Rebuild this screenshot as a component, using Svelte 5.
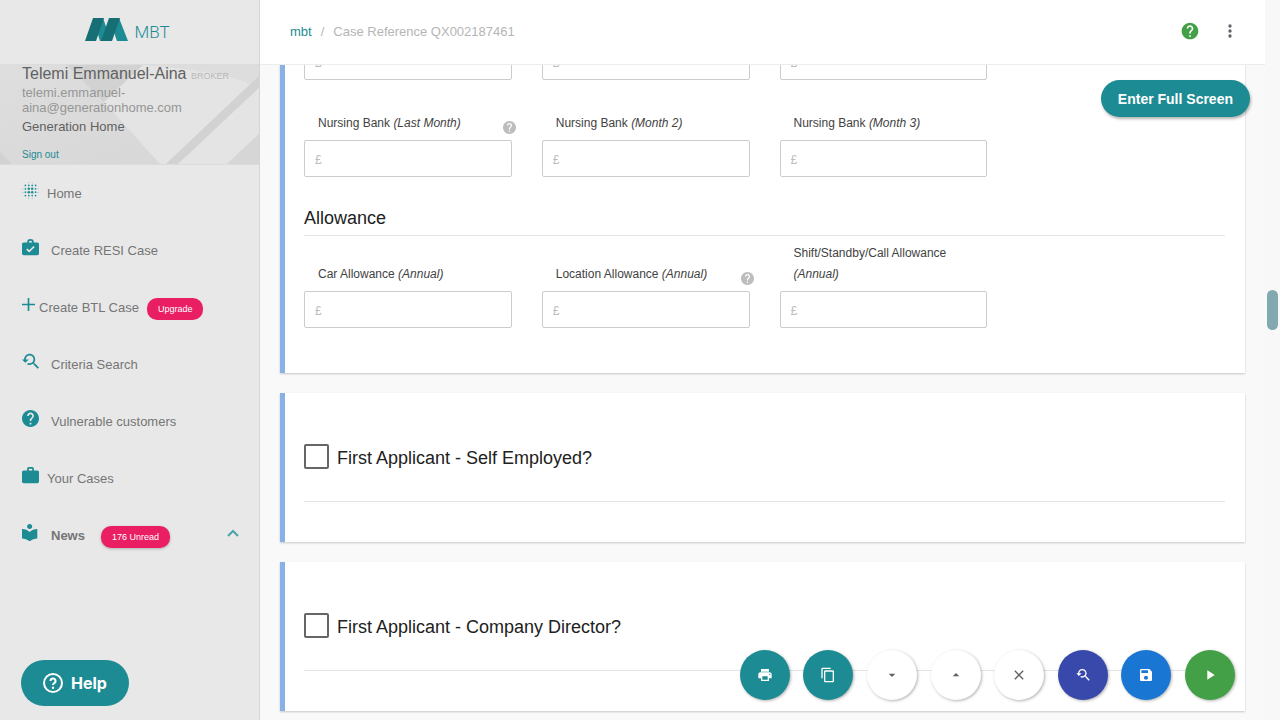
<script>
  const bag = 'M20 6h-4V4c0-1.11-.89-2-2-2h-4c-1.11 0-2 .89-2 2v2H4c-1.11 0-2 .89-2 2v11c0 1.11.89 2 2 2h16c1.11 0 2-.89 2-2V8c0-1.11-.89-2-2-2zm-6 0h-4V4h4v2z';
  const checkBag = 'M20 6h-4a4 4 0 0 0-8 0H4c-1.1 0-2 .9-2 2v11c0 1.1.9 2 2 2h16c1.1 0 2-.9 2-2V8c0-1.1-.9-2-2-2zm-8-2c1.1 0 2 .9 2 2h-4c0-1.1.9-2 2-2zm-1.500 14L7 14.500l1.400-1.400 2.100 2.100 5.100-5.100 1.400 1.400-6.500 6.500z';
  const help = 'M12 2C6.48 2 2 6.48 2 12s4.48 10 10 10 10-4.480 10-10S17.520 2 12 2zm1 17h-2v-2h2v2zm2.070-7.750l-.9.920C13.450 12.900 13 13.500 13 15h-2v-.5c0-1.100.45-2.100 1.170-2.830l1.240-1.260c.37-.36.59-.86.59-1.410 0-1.100-.9-2-2-2s-2 .9-2 2H8c0-2.210 1.790-4 4-4s4 1.790 4 4c0 .88-.36 1.680-.93 2.250z';
  const searchBack = 'M17.01 14h-.8l-.27-.27c.98-1.14 1.57-2.61 1.57-4.23 0-3.59-2.91-6.5-6.5-6.5s-6.5 3-6.5 6.5H2l3.84 4 4.16-4H6.51C6.51 7 8.53 5 11.01 5s4.5 2.01 4.5 4.5c0 2.48-2.02 4.5-4.5 4.5-.65 0-1.26-.14-1.82-.38L7.71 15.1c.97.57 2.09.9 3.3.9 1.61 0 3.08-.59 4.22-1.57l.27.27v.79l5.01 4.99L22 19l-4.99-5z';
  const library = 'M12 11.55C9.64 9.35 6.48 8 3 8v11c3.48 0 6.64 1.35 9 3.55 2.36-2.19 5.52-3.55 9-3.55V8c-3.48 0-6.64 1.35-9 3.55zM12 8c1.66 0 3-1.34 3-3s-1.34-3-3-3-3 1.34-3 3 1.34 3 3 3z';
  const print = 'M19 8H5c-1.66 0-3 1.34-3 3v6h4v4h12v-4h4v-6c0-1.66-1.34-3-3-3zm-3 11H8v-5h8v5zm3-7c-.55 0-1-.45-1-1s.45-1 1-1 1 .45 1 1-.45 1-1 1zm-1-9H6v4h12V3z';
  const copy = 'M16 1H4c-1.1 0-2 .9-2 2v14h2V3h12V1zm3 4H8c-1.1 0-2 .9-2 2v14c0 1.1.9 2 2 2h11c1.1 0 2-.9 2-2V7c0-1.1-.9-2-2-2zm0 16H8V7h11v14z';
  const close = 'M19 6.41L17.59 5 12 10.59 6.41 5 5 6.41 10.59 12 5 17.59 6.41 19 12 13.41 17.59 19 19 17.59 13.41 12z';
  const save = 'M17 3H5c-1.11 0-2 .9-2 2v14c0 1.1.89 2 2 2h14c1.1 0 2-.9 2-2V7l-4-4zm-5 16c-1.66 0-3-1.34-3-3s1.34-3 3-3 3 1.34 3 3-1.34 3-3 3zm3-10H5V5h10v4z';

  // Rows of the dotted home glyph: [y, [x, radius]...]
  const dots = [
    [3, [10, 0.5], [14, 0.5]],
    [6, [6, 1], [10, 1], [14, 1], [18, 1]],
    [10, [3, 0.5], [6, 1], [10, 1.5], [14, 1.5], [18, 1], [21, 0.5]],
    [14, [3, 0.5], [6, 1], [10, 1.5], [14, 1.5], [18, 1], [21, 0.5]],
    [18, [6, 1], [10, 1], [14, 1], [18, 1]],
    [21, [10, 0.5], [14, 0.5]]
  ];

  const nav = [
    { text: 'Home', dots: true, box: '2 2 20 20', gap: 'g8' },
    { text: 'Create RESI Case', d: checkBag, box: '2 2 20 20', gap: 'g12' },
    { text: 'Create BTL Case', d: 'M9 2h2v7h7v2h-7v7H9v-7H2V9h7z', box: '2 2 16 16', gap: 'g4', small: true, badge: 'Upgrade' },
    { text: 'Criteria Search', d: searchBack, box: '2 2 20 20', gap: 'g12' },
    { text: 'Vulnerable customers', d: help, box: '2 2 20 20', gap: 'g12' },
    { text: 'Your Cases', d: bag, box: '2 2 20 20', gap: 'g8' },
    { text: 'News', d: library, box: '3 2 20 20', gap: 'g12', bold: true, badge: '176 Unread' }
  ];

  const nursing = [
    { id: 'nb1', label: 'Nursing Bank', note: '(Last Month)', tip: true },
    { id: 'nb2', label: 'Nursing Bank', note: '(Month 2)' },
    { id: 'nb3', label: 'Nursing Bank', note: '(Month 3)' }
  ];
  const allowance = [
    { id: 'al1', label: 'Car Allowance', note: '(Annual)' },
    { id: 'al2', label: 'Location Allowance', note: '(Annual)', tip: true },
    { id: 'al3', label: 'Shift/Standby/Call Allowance', note: '(Annual)' }
  ];
  const sections = ['First Applicant - Self Employed?', 'First Applicant - Company Director?'];

  const actions = [
    { name: 'Print', d: print, tone: 'teal' },
    { name: 'Copy', d: copy, tone: 'teal' },
    { name: 'Next section', d: 'M7 10l5 5 5-5z', tone: 'plain' },
    { name: 'Previous section', d: 'M7 14l5-5 5 5z', tone: 'plain' },
    { name: 'Close', d: close, tone: 'plain' },
    { name: 'Search criteria', d: searchBack, tone: 'indigo' },
    { name: 'Save', d: save, tone: 'blue' },
    { name: 'Continue', d: 'M8 5v14l11-7z', tone: 'green' }
  ];
</script>

{#snippet fields(list)}
  <div class="fields">
    {#each list as f}
      <div class="field">
        <div class="caption">
          <label for={f.id}>{f.label} <em>{f.note}</em></label>
          {#if f.tip}
            <svg class="tip" viewBox="2 2 20 20" aria-hidden="true"><path d={help} /></svg>
          {/if}
        </div>
        <input id={f.id} type="text" placeholder="£" />
      </div>
    {/each}
  </div>
{/snippet}

<div class="shell">
  <aside>
    <a class="brand" href="#home">
      <svg viewBox="0 0 43 23" aria-hidden="true">
        <path fill="#1c8b93" d="M18 0l8 23H15L8 0zM34 0l9 23H32L24 0z" />
        <path fill="#176f76" d="M8 0h11l-8 23H0zM24 0h11l-8 23H16z" />
      </svg>
      <span>MBT</span>
    </a>

    <section class="user">
      <svg class="backdrop" viewBox="0 0 259 99" preserveAspectRatio="none" aria-hidden="true">
        <defs>
          <linearGradient id="shade" x1="0" y1="0" x2="1" y2="1">
            <stop offset="0" stop-color="#dedede" />
            <stop offset="1" stop-color="#d6d6d6" />
          </linearGradient>
        </defs>
        <rect width="259" height="99" fill="url(#shade)" />
        <path fill="#d2d2d2" d="M67 0h76l-39 37z" />
        <path fill="#e4e4e4" d="M143 0h116v11l-93 88h-6l-56-62z" />
        <path fill="#dddddd" d="M143 0h116v11l-8 8q-36-14-108-19z" />
        <path fill="#d2d2d2" d="M259 11v12l-81 76h-12z" />
        <path fill="#e4e4e4" d="M259 23v46l-32 30h-49z" />
        <path fill="#d6d6d6" d="M259 69v30h-32z" />
        <path fill="#d2d2d2" d="M0 87l12 12H0z" />
      </svg>
      <div class="name">Telemi Emmanuel-Aina <small>BROKER</small></div>
      <div class="email">telemi.emmanuel-<br />aina@generationhome.com</div>
      <div class="firm">Generation Home</div>
      <a class="signout" href="#signout">Sign out</a>
    </section>

    <nav>
      {#each nav as n}
        <a href="#nav" class={n.gap} class:bold={n.bold}>
          <svg class="glyph" class:small={n.small} viewBox={n.box} aria-hidden="true">
            {#if n.dots}
              {#each dots as [y, ...row]}
                {#each row as [x, r]}<circle cx={x} cy={y} {r} />{/each}
              {/each}
            {:else}
              <path d={n.d} />
            {/if}
          </svg>
          <span>{n.text}</span>
          {#if n.badge}<span class="badge" class:raised={n.bold}>{n.badge}</span>{/if}
          {#if n.bold}
            <svg class="caret" viewBox="0 0 12 8" aria-hidden="true"><path d="M1 7l5-5 5 5" /></svg>
          {/if}
        </a>
      {/each}
    </nav>

    <button class="help">
      <svg viewBox="0 0 20 20" aria-hidden="true">
        <circle cx="10" cy="10" r="9" />
        <path d="M7.500 8a2.500 2.500 0 1 1 3.700 2.200q-1.200.7-1.200 1.900" />
        <circle class="dot" cx="10" cy="14.700" r="1.200" />
      </svg>
      Help
    </button>
  </aside>

  <div class="page">
    <header>
      <div class="crumbs"><a href="#mbt">mbt</a><i>/</i><span>Case Reference QX002187461</span></div>
      <button class="tool green-ink" aria-label="Help"><svg viewBox="0 0 24 24"><path d={help} /></svg></button>
      <button class="tool" aria-label="More"><svg viewBox="0 0 24 24"><circle cx="12" cy="6" r="2" /><circle cx="12" cy="12" r="2" /><circle cx="12" cy="18" r="2" /></svg></button>
    </header>

    <main>
      <article class="income">
        <div class="fields">
          {#each [1, 2, 3] as m}
            <div class="field"><input type="text" placeholder="£" aria-label="Amount {m}" /></div>
          {/each}
        </div>
        {@render fields(nursing)}
        <h2>Allowance</h2>
        {@render fields(allowance)}
      </article>
      {#each sections as title}
        <article class="question">
          <label><input type="checkbox" /><span>{title}</span></label>
        </article>
      {/each}
    </main>
  </div>

  <div class="track"><div class="thumb"></div></div>

  <button class="fullscreen">Enter Full Screen</button>

  <div class="actions">
    {#each actions as a}
      <button class={a.tone} aria-label={a.name}><svg viewBox="0 0 24 24"><path d={a.d} /></svg></button>{' '}
    {/each}
  </div>
</div>

<style>
  :global(body) { background: #f9f9f9; }
  .shell {
    position: relative;
    display: grid;
    grid-template-columns: 260px 1fr 15px;
    height: 100vh;
    overflow: hidden;
    font-family: "Liberation Sans", Arial, sans-serif;
    font-size: 13px;
    color: #212121;
  }
  .shell :global(*) { box-sizing: border-box; }
  button { font: inherit; border: 0; padding: 0; cursor: pointer; }
  a { text-decoration: none; }
  svg { display: block; fill: currentColor; flex: none; }

  aside {
    position: relative;
    background: #e8e8e8;
    border-right: 1px solid #d4d4d4;
  }
  .brand {
    display: flex;
    justify-content: center;
    align-items: center;
    gap: 6px;
    height: 65px;
    padding: 0 4px 6px 0;
    border-bottom: 1px solid #dcdcdc;
    color: #1c8b93;
    font: 300 17px/24px Roboto, sans-serif;
  }
  .brand svg { width: 43px; height: 23px; }
  .brand span { padding-top: 5px; }

  .user {
    position: relative;
    padding: 0 22px 2px;
    color: #616161;
    line-height: 15px;
    border-bottom: 1px solid #dcdcdc;
  }
  .backdrop { position: absolute; inset: 0; width: 100%; height: 100%; }
  .user > :not(.backdrop) { position: relative; }
  .name { font-size: 16px; line-height: 18px; white-space: nowrap; }
  .name small { font-size: 9px; color: #b8b8b8; }
  .email { color: #969696; }
  .firm { margin-top: 4px; }
  .signout { display: block; margin-top: 13px; font-size: 10px; color: #1c8b93; }

  nav a {
    display: flex;
    align-items: center;
    height: 57px;
    padding: 0 20px 0 22px;
    color: #757575;
  }
  .g4 { gap: 4px; }
  .g8 { gap: 8px; }
  .g12 { gap: 12px; }
  .bold { font-weight: bold; }
  .glyph { width: 17px; height: 17px; margin-bottom: 6px; color: #1c8b93; }
  .glyph.small { width: 13px; height: 13px; }
  .badge {
    margin: 2px 0 0 4px;
    padding: 0 11px;
    border-radius: 10px;
    background: #e91e63;
    color: #fff;
    font-size: 9px;
    font-weight: normal;
    line-height: 22px;
  }
  .raised { box-shadow: 0 1px 3px rgba(0, 0, 0, 0.25); }
  .caret { width: 12px; height: 8px; margin: 0 0 6px auto; fill: none; stroke: #4ba3a9; stroke-width: 2; }

  .help {
    position: absolute;
    left: 21px;
    bottom: 14px;
    display: flex;
    align-items: center;
    gap: 8px;
    height: 46px;
    padding: 0 22px;
    border-radius: 23px;
    background: #1c8b93;
    color: #fff;
    font: 700 16px/20px Inter, sans-serif;
  }
  .help svg { width: 20px; height: 20px; fill: none; stroke: #fff; stroke-width: 2; }
  .help .dot { fill: #fff; stroke: none; }

  .page { display: flex; flex-direction: column; min-width: 0; height: 100vh; }
  header {
    position: relative;
    flex: none;
    display: flex;
    align-items: center;
    gap: 20px;
    height: 65px;
    padding: 0 25px 2px 30px;
    background: #fff;
    border-bottom: 1px solid #ececec;
  }
  .crumbs { flex: 1; display: flex; gap: 9px; color: #b5b5b5; }
  .crumbs a { color: #1c8b93; }
  .crumbs i { font-style: normal; }
  .tool { background: none; color: #5f6368; }
  .tool svg { width: 20px; height: 20px; }
  .green-ink { color: #43a047; }

  main {
    flex: 1;
    min-height: 0;
    overflow: hidden;
    padding: 0 20px;
  }
  article {
    margin-bottom: 20px;
    padding: 0 20px 0 19px;
    border-left: 5px solid #8ab0e8;
    background: #fff;
    box-shadow: 0 1px 2px rgba(0, 0, 0, 0.2);
  }
  .income { margin-top: -22px; padding-bottom: 45px; }
  .fields {
    display: grid;
    grid-template-columns: repeat(4, 1fr);
    column-gap: 30px;
    align-items: end;
  }
  .fields + .fields { margin-top: 33px; }
  .caption {
    display: flex;
    align-items: end;
    justify-content: space-between;
    margin: 0 -4px 6px 14px;
    font-size: 12px;
    line-height: 21px;
    color: #424242;
  }
  .tip { width: 13px; height: 13px; color: #bdbdbd; }
  .field input {
    display: block;
    width: 100%;
    height: 37px;
    padding: 3px 10px 0;
    border: 1px solid #ccc;
    border-radius: 2px;
    background: #fff;
    font: 12px "Liberation Sans", Arial, sans-serif;
  }
  .field input::placeholder { color: #bdbdbd; opacity: 1; }
  h2 {
    margin: 29px 0 7px;
    padding-bottom: 5px;
    border-bottom: 1px solid #e4e4e4;
    font-size: 18px;
    font-weight: normal;
    line-height: 24px;
  }
  .question { padding-top: 51px; padding-bottom: 40px; }
  .question label {
    display: flex;
    align-items: center;
    gap: 8px;
    padding-bottom: 32px;
    border-bottom: 1px solid #e4e4e4;
    font-size: 18px;
    line-height: 21px;
  }
  .question span { padding-top: 4px; }
  .question input {
    appearance: none;
    width: 25px;
    height: 25px;
    margin: 0;
    border: 2px solid #666;
    border-radius: 2px;
  }

  .track { position: relative; background: #f8f8f8; }
  .thumb {
    position: absolute;
    top: 290px;
    right: 2px;
    width: 11px;
    height: 40px;
    border-radius: 6px;
    background: #82a9b0;
  }
  .fullscreen {
    position: absolute;
    top: 80px;
    right: 30px;
    height: 37px;
    padding: 0 17px;
    border-radius: 19px;
    background: #1c8b93;
    color: #fff;
    font-size: 14px;
    font-weight: bold;
    box-shadow: 1px 2px 3px rgba(0, 0, 0, 0.3);
  }
  .actions { position: absolute; right: 40px; bottom: 20px; white-space: nowrap; }
  .actions button {
    display: inline-flex;
    align-items: center;
    justify-content: center;
    vertical-align: top;
    width: 50px;
    height: 50px;
    margin: 0 5px;
    border-radius: 50%;
    color: #fff;
    box-shadow: 1px 1px 3px rgba(0, 0, 0, 0.3);
  }
  .actions svg { width: 16px; height: 16px; }
  .actions .teal { background: #1c8b93; }
  .actions .plain { background: #fff; color: #616161; }
  .actions .indigo { background: #3949ab; }
  .actions .blue { background: #1976d2; }
  .actions .green { background: #43a047; }
</style>
